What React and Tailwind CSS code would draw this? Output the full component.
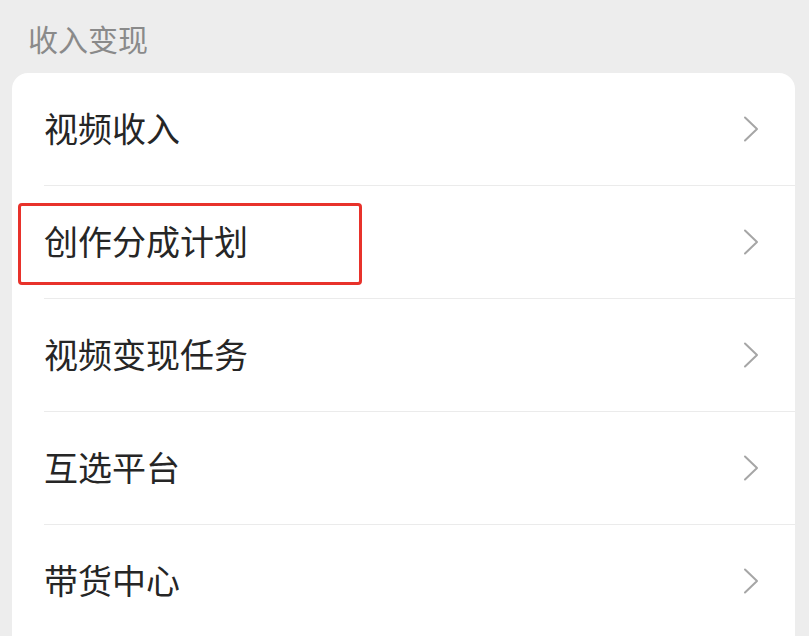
import React from 'react';

const items = ['视频收入', '创作分成计划', '视频变现任务', '互选平台', '带货中心'];

function Chevron() {
  return (
    <svg width="17" height="28" viewBox="0 0 17 28" fill="none" className="shrink-0">
      <path d="M3 2.5 L15 14 L3 25.5" stroke="#a6a6a6" strokeWidth="2" strokeLinecap="round" strokeLinejoin="round" />
    </svg>
  );
}

export default function App() {
  return (
    <div
      className="w-[809px] h-[636px] overflow-hidden bg-[#ededed]"
      style={{ fontFamily: '"Noto Sans CJK SC", "Noto Sans", sans-serif' }}
    >
      <div className="h-[73px] pl-[28px] pt-[19px] text-[30px] leading-[38px] text-[#8a8a8a]">收入变现</div>
      <div className="ml-[12px] mr-[14px] bg-white rounded-t-[16px] overflow-hidden">
        {items.map((label, i) => (
          <div key={label} className="pl-[32px]">
            <div className="h-[113px] flex items-center justify-between pr-[36px] border-b border-[#ebebeb]">
              <div className="relative">
                <span className="text-[34px] leading-none text-[#262626]">{label}</span>
                {i === 1 && (
                  <div className="absolute left-[-26px] top-[-21px] w-[344px] h-[82px] border-[3px] border-[#e8322b] rounded-[4px]" />
                )}
              </div>
              <Chevron />
            </div>
          </div>
        ))}
      </div>
    </div>
  );
}
